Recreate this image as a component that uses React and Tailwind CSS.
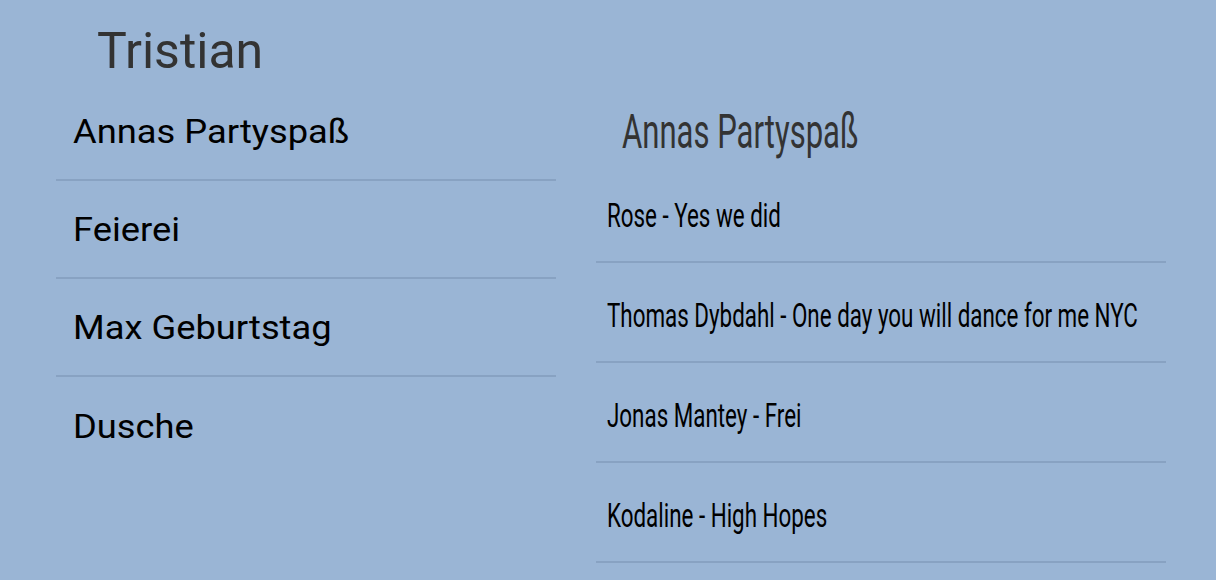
const playlists = ["Annas Partyspaß", "Feierei", "Max Geburtstag", "Dusche"];

const songs = [
  "Rose - Yes we did",
  "Thomas Dybdahl - One day you will dance for me NYC",
  "Jonas Mantey - Frei",
  "Kodaline - High Hopes",
];

export default function App() {
  return (
    <div className="flex h-[580px] w-full overflow-hidden bg-[#9ab5d5] font-['Roboto',sans-serif]">
      {/* playlists */}
      <div className="ml-[56px] flex w-[500px] flex-col">
        <div className="flex h-[83px] items-center pt-[19px] pl-[41px]">
          <h1 className="text-[50px] leading-none text-[#333333]">Tristian</h1>
        </div>
        {playlists.map((name, i) => (
          <div
            key={name}
            className={
              i < playlists.length - 1
                ? "flex h-[98px] items-center border-b-2 border-[#88a2c2] pl-[17px]"
                : "flex h-[98px] items-center pl-[17px]"
            }
          >
            <span className="inline-block origin-left scale-x-[1.1] whitespace-nowrap text-[33px] leading-none text-black">
              {name}
            </span>
          </div>
        ))}
      </div>

      {/* songs of selected playlist */}
      <div className="ml-[40px] flex w-[570px] flex-col">
        <div className="flex h-[163px] items-center pt-[101px] pl-[26px]">
          <h2 className="inline-block origin-left scale-x-[0.647] whitespace-nowrap text-[48px] leading-none text-[#333333]">
            Annas Partyspaß
          </h2>
        </div>
        {songs.map((song) => (
          <div
            key={song}
            className="flex h-[100px] items-center border-b-2 border-[#88a2c2] pt-[6px] pl-[11px]"
          >
            <span className="inline-block origin-left scale-x-[0.658] whitespace-nowrap text-[34px] leading-none text-black">
              {song}
            </span>
          </div>
        ))}
      </div>
    </div>
  );
}
